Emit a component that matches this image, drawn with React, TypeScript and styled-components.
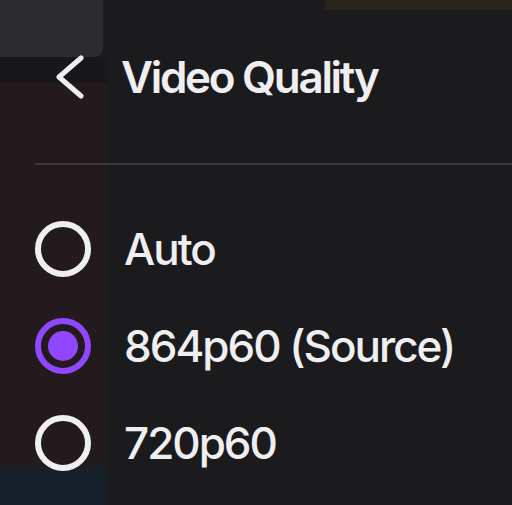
import React from "react";
import styled, { createGlobalStyle } from "styled-components";

const GlobalStyle = createGlobalStyle`
  html, body { margin: 0; padding: 0; }
  body {
    width: 512px;
    height: 505px;
    overflow: hidden;
    background: #1b1b1e;
    font-family: Inter, "Noto Sans", sans-serif;
  }
`;

const Stage = styled.div`
  width: 512px;
  height: 505px;
  box-sizing: border-box;
  padding-left: 35px;
  background-color: #1b1b1e;
  background-image:
    linear-gradient(#2a251b, #2a251b),
    radial-gradient(circle at 0 0, #2c2c2f 0, #2c2c2f 6px, transparent 7px),
    linear-gradient(#2c2c2f, #2c2c2f),
    linear-gradient(#2c2c2f, #2c2c2f),
    linear-gradient(
      to bottom,
      #18181b 0px,
      #18181b 26px,
      #231a1d 26px,
      #231a1d 402px,
      #16202a 414px,
      #15202a 448px
    );
  background-size: 190px 10px, 7px 7px, 103px 50px, 96px 57px, 107px 448px;
  background-position: 325px 0, 96px 50px, 0 0, 0 0, 0 57px;
  background-repeat: no-repeat;
`;

const Header = styled.div`
  height: 154px;
  display: flex;
  align-items: center;
  padding-left: 20px;
  gap: 36px;
`;

const Title = styled.h1`
  margin: 0;
  font-size: 44px;
  font-weight: 600;
  letter-spacing: -2.3px;
  color: #efeff1;
`;

const Divider = styled.hr`
  margin: 9px 0 0;
  border: 0;
  height: 2px;
  background: #3a3a3d;
`;

const List = styled.div`
  display: flex;
  flex-direction: column;
  padding-top: 35px;
`;

const Row = styled.label`
  height: 97px;
  display: flex;
  align-items: center;
  gap: 33px;
  color: #efeff1;
  font-size: 44px;
  font-weight: 500;
  letter-spacing: -2px;
`;

const Radio = styled.span<{ $checked?: boolean }>`
  width: 56px;
  height: 56px;
  box-sizing: border-box;
  border-radius: 50%;
  border: 6px solid ${(p) => (p.$checked ? "#9147ff" : "#efeff1")};
  display: flex;
  align-items: center;
  justify-content: center;
  flex-shrink: 0;
  &::after {
    content: "";
    width: 30px;
    height: 30px;
    border-radius: 50%;
    background: ${(p) => (p.$checked ? "#9147ff" : "transparent")};
  }
`;

const BackIcon = () => (
  <svg width="30" height="44" viewBox="0 0 30 44" fill="none">
    <path
      d="M26 3 L4 22 L26 41"
      stroke="#efeff1"
      strokeWidth="5"
      strokeLinecap="round"
      strokeLinejoin="round"
    />
  </svg>
);

const options = [
  { label: "Auto", checked: false },
  { label: "864p60 (Source)", checked: true },
  { label: "720p60", checked: false },
];

export default function App() {
  return (
    <>
      <GlobalStyle />
      <Stage>
        <Header>
          <BackIcon />
          <Title>Video Quality</Title>
        </Header>
        <Divider />
        <List>
          {options.map((o) => (
            <Row key={o.label}>
              <Radio $checked={o.checked} />
              {o.label}
            </Row>
          ))}
        </List>
      </Stage>
    </>
  );
}
